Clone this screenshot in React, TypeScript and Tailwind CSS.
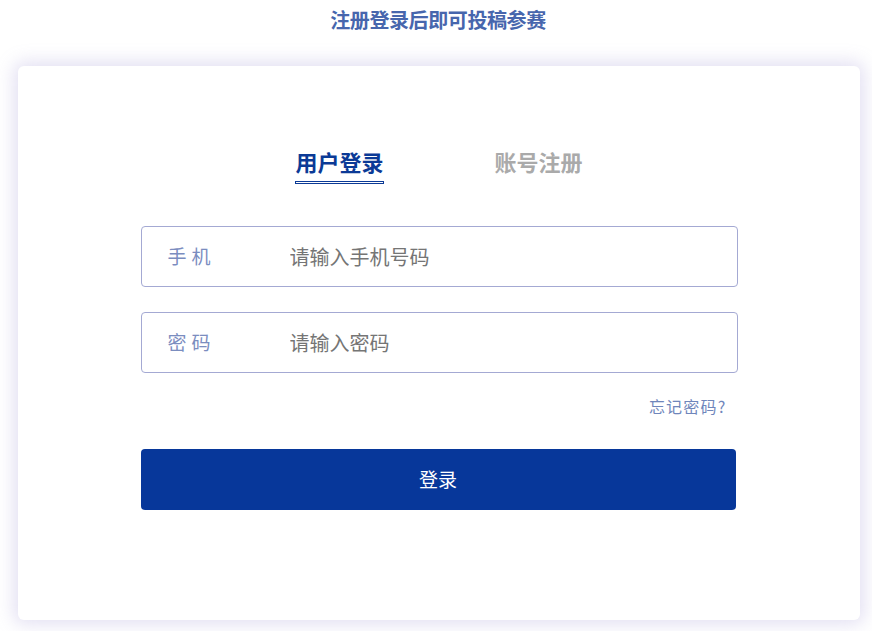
import { useState } from "react";

const font = { fontFamily: '"Noto Sans CJK SC", "Noto Sans", sans-serif' };

function Field({ label, placeholder, type = "text" }: { label: string; placeholder: string; type?: string }) {
  return (
    <label className="flex h-[61px] items-center rounded-[4px] border border-[#a4a9d3] bg-white">
      <span className="w-[148px] shrink-0 pl-[26px] text-[19px] tracking-[5px] text-[#7b8dbf]">{label}</span>
      <input
        type={type}
        placeholder={placeholder}
        className="h-full flex-1 bg-transparent pr-4 text-[20px] text-[#555] outline-none placeholder:text-[#757575]"
      />
    </label>
  );
}

export default function App() {
  const [tab, setTab] = useState<"login" | "register">("login");

  return (
    <div className="min-h-[631px] bg-white" style={font}>
      <div className="flex h-[40px] items-center justify-center pl-[4px] text-[20px] font-bold tracking-[-0.4px] text-[#4766ad]">
        注册登录后即可投稿参赛
      </div>

      <div className="ml-[18px] mt-[26px] h-[554px] w-[842px] rounded-[6px] bg-white pt-[80px] shadow-[0_0_18px_4px_rgba(150,140,210,0.28)]">
        <div className="flex justify-center gap-[110px]">
          <button onClick={() => setTab("login")} className="flex flex-col items-center">
            <span className={`text-[22px] font-bold leading-[30px] ${tab === "login" ? "text-[#0b3a96]" : "text-[#aaaaaa]"}`}>用户登录</span>
            <span className={`mt-[5px] h-[3px] w-[89px] border ${tab === "login" ? "border-[#0b3a96]" : "border-transparent"}`} />
          </button>
          <button onClick={() => setTab("register")} className="flex flex-col items-center">
            <span className={`text-[22px] font-bold leading-[30px] ${tab === "register" ? "text-[#0b3a96]" : "text-[#aaaaaa]"}`}>账号注册</span>
            <span className={`mt-[5px] h-[3px] w-[89px] border ${tab === "register" ? "border-[#0b3a96]" : "border-transparent"}`} />
          </button>
        </div>

        <div className="mx-auto mt-[42px] w-[597px]">
          <Field label="手机" placeholder="请输入手机号码" />
          <div className="mt-[25px]">
            <Field label="密码" placeholder="请输入密码" type="password" />
          </div>
          <div className="mt-[23px] flex justify-end pr-[11px] text-[16px] leading-[20px] tracking-[1.2px] text-[#6f86bb]">
            <a href="#">忘记密码?</a>
          </div>
          <button className="mt-[33px] h-[61px] w-[595px] rounded-[4px] bg-[#07379a] text-[19px] text-white">
            登录
          </button>
        </div>
      </div>
    </div>
  );
}
